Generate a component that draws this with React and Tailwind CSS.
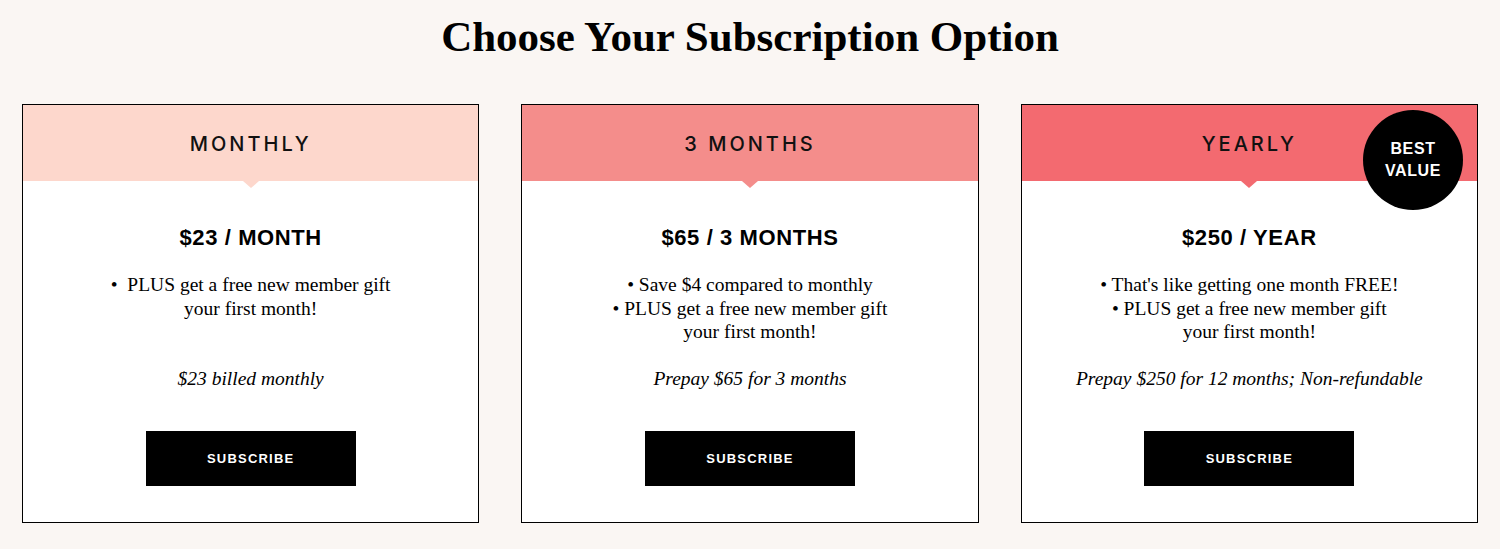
const plans = [
  {
    name: "MONTHLY",
    color: "bg-[#fdd7cc]",
    arrow: "border-t-[#fdd7cc]",
    price: "$23 / MONTH",
    lines: ["•  PLUS get a free new member gift", "your first month!"],
    note: "$23 billed monthly",
  },
  {
    name: "3 MONTHS",
    color: "bg-[#f48d8b]",
    arrow: "border-t-[#f48d8b]",
    price: "$65 / 3 MONTHS",
    lines: ["• Save $4 compared to monthly", "• PLUS get a free new member gift", "your first month!"],
    note: "Prepay $65 for 3 months",
  },
  {
    name: "YEARLY",
    color: "bg-[#f36a70]",
    arrow: "border-t-[#f36a70]",
    price: "$250 / YEAR",
    lines: ["• That's like getting one month FREE!", "• PLUS get a free new member gift", "your first month!"],
    note: "Prepay $250 for 12 months; Non-refundable",
    best: true,
  },
];

function PlanCard({ plan }) {
  return (
    <div className="relative border border-black bg-white flex flex-col">
      <div
        className={`relative h-[76px] flex items-center justify-center ${plan.color}`}
      >
        <span className="font-['Inter'] text-[20px] font-medium tracking-[3px] text-[#111] pt-[1px]">
          {plan.name}
        </span>
        {/* little arrow under the header */}
        <div
          className={`absolute left-1/2 top-full -translate-x-1/2 w-0 h-0 border-x-[8px] border-x-transparent border-t-[7px] ${plan.arrow}`}
        ></div>
      </div>
      {plan.best && (
        <div className="absolute right-[14px] top-[5px] w-[100px] h-[100px] rounded-full bg-black flex items-center justify-center z-10">
          <span className="font-['Liberation_Sans'] text-white font-bold text-[16px] leading-[22px] text-center tracking-[0.6px]">
            BEST
            <br />
            VALUE
          </span>
        </div>
      )}
      <div className="flex flex-col items-center pt-[43px] pb-[36px]">
        <h2 className="font-['Liberation_Sans'] font-bold text-[22px] leading-[28px] tracking-[0.6px] text-black">
          {plan.price}
        </h2>
        <div className="mt-[21px] h-[71px] font-['Liberation_Serif'] text-[19.5px] leading-[23.5px] text-black text-center whitespace-pre">
          {plan.lines.map((l, i) => (
            <div key={i}>{l}</div>
          ))}
        </div>
        <p className="mt-[23px] font-['Liberation_Serif'] italic text-[19.5px] leading-[24px] text-black">
          {plan.note}
        </p>
        <button className="mt-[40px] w-[210px] h-[55px] bg-black text-white font-['Liberation_Sans'] font-bold text-[13px] tracking-[1.2px]">
          SUBSCRIBE
        </button>
      </div>
    </div>
  );
}

export default function App() {
  return (
    <div className="min-h-[549px] bg-[#faf6f3] px-[22px] pt-[12px]">
      <h1 className="text-center font-['Liberation_Serif'] font-bold text-[43px] leading-[50px] text-black">
        Choose Your Subscription Option
      </h1>
      <div className="mt-[42px] grid grid-cols-3 gap-[42px]">
        {plans.map((p) => (
          <PlanCard key={p.name} plan={p} />
        ))}
      </div>
    </div>
  );
}
